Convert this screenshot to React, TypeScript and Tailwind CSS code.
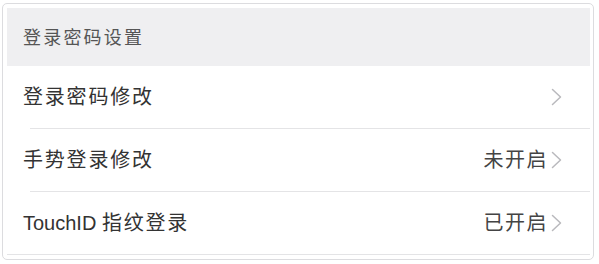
const rows = [
  { latin: "", label: "登录密码修改", value: "" },
  { latin: "", label: "手势登录修改", value: "未开启" },
  { latin: "TouchID", label: "指纹登录", value: "已开启" },
];

function Chevron() {
  return (
    <svg width="11" height="18" viewBox="0 0 11 18" className="shrink-0">
      <polyline
        points="1.5,1.5 9.5,9 1.5,16.5"
        fill="none"
        stroke="#b9b9bd"
        strokeWidth="1.5"
        strokeLinecap="round"
        strokeLinejoin="round"
      />
    </svg>
  );
}

export default function App() {
  return (
    <div
      className="h-[264px] w-[599px] bg-white pl-[2px] pt-[3px]"
      style={{ fontFamily: '"Liberation Sans", "Noto Sans CJK SC", sans-serif' }}
    >
      <div className="h-[257px] w-[592px] rounded-[5px] border border-[#dcdcdf] pb-[3px] pl-[4px] pr-[3px] pt-[4px]">
        <div className="flex h-[58px] items-center bg-[#efeff1] pl-[16px] pt-[3px] text-[18px] tracking-[2.2px] text-[#555]">
          登录密码设置
        </div>

        {rows.map((row, i) => (
          <div key={row.label}>
            <div className="flex h-[62px] items-center justify-between pl-[16px] pr-[28px]">
              <span className="text-[20px] text-[#333]">
                {row.latin && <span>{row.latin} </span>}
                <span className="tracking-[1.8px]">{row.label}</span>
              </span>
              <div className="flex items-center gap-[3px]">
                {row.value && (
                  <span className="text-[20px] tracking-[1.5px] text-[#444]">
                    {row.value}
                  </span>
                )}
                <Chevron />
              </div>
            </div>
            {i < rows.length - 1 ? (
              <div className="ml-[23px] h-[1px] bg-[#e4e4e6]" />
            ) : (
              <div className="h-[1px] bg-[#e4e4e6]" />
            )}
          </div>
        ))}
      </div>
    </div>
  );
}
